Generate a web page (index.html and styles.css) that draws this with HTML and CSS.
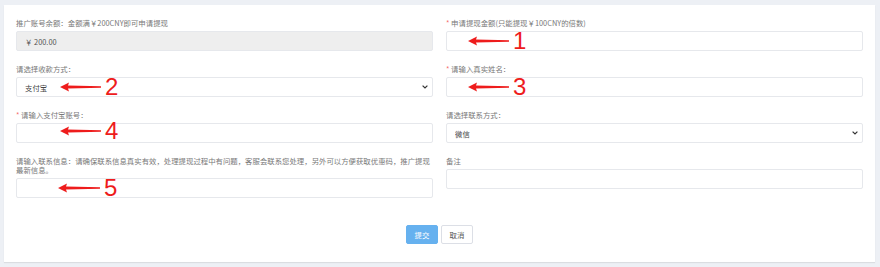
FILE: index.html
```html
<!DOCTYPE html>
<html lang="zh-CN">
<head>
  <meta charset="UTF-8">
  <title>推广提现</title>
  <link rel="stylesheet" href="styles.css">
</head>
<body>
  <div class="card">
    <form class="withdraw-form">
      <div class="form-grid">
        <div class="form-item">
          <label class="form-label">推广账号余额：金额满￥200CNY即可申请提现</label>
          <input class="form-input" type="text" value="￥ 200.00" disabled>
        </div>
        <div class="form-item">
          <label class="form-label"><span class="required">*</span> 申请提现金额(只能提现￥100CNY的倍数)</label>
          <input class="form-input" type="text">
        </div>
        <div class="form-item">
          <label class="form-label">请选择收款方式：</label>
          <div class="select-wrap">
            <select class="form-input form-select">
              <option>支付宝</option>
              <option>微信</option>
            </select>
            <svg class="select-caret" width="6" height="4" viewBox="0 0 6 4"><path d="M0.6 0.6 L3 3 L5.4 0.6"/></svg>
          </div>
        </div>
        <div class="form-item">
          <label class="form-label"><span class="required">*</span> 请输入真实姓名：</label>
          <input class="form-input" type="text">
        </div>
        <div class="form-item">
          <label class="form-label"><span class="required">*</span> 请输入支付宝账号：</label>
          <input class="form-input" type="text">
        </div>
        <div class="form-item">
          <label class="form-label">请选择联系方式：</label>
          <div class="select-wrap">
            <select class="form-input form-select">
              <option>微信</option>
              <option>QQ</option>
            </select>
            <svg class="select-caret" width="6" height="4" viewBox="0 0 6 4"><path d="M0.6 0.6 L3 3 L5.4 0.6"/></svg>
          </div>
        </div>
        <div class="form-item">
          <label class="form-label">请输入联系信息：请确保联系信息真实有效，处理提现过程中有问题，客服会联系您处理，另外可以方便获取优惠码，推广提现最新信息。</label>
          <input class="form-input" type="text">
        </div>
        <div class="form-item">
          <label class="form-label">备注</label>
          <input class="form-input" type="text">
        </div>
      </div>
      <div class="form-actions">
        <button type="button" class="btn btn-primary">提交</button>
        <button type="button" class="btn">取消</button>
      </div>
    </form>

    <!-- 标注箭头 -->
    <div class="mark mark-1"><svg class="arrow" width="41" height="10" viewBox="0 0 41 10"><polygon points="0,5 9,0.4 8,3.4 41,4.2 41,5.8 8,6.6 9,9.6"/></svg><span class="mark-num">1</span></div>
    <div class="mark mark-2"><svg class="arrow" width="41" height="10" viewBox="0 0 41 10"><polygon points="0,5 9,0.4 8,3.4 41,4.2 41,5.8 8,6.6 9,9.6"/></svg><span class="mark-num">2</span></div>
    <div class="mark mark-3"><svg class="arrow" width="41" height="10" viewBox="0 0 41 10"><polygon points="0,5 9,0.4 8,3.4 41,4.2 41,5.8 8,6.6 9,9.6"/></svg><span class="mark-num">3</span></div>
    <div class="mark mark-4"><svg class="arrow" width="41" height="10" viewBox="0 0 41 10"><polygon points="0,5 9,0.4 8,3.4 41,4.2 41,5.8 8,6.6 9,9.6"/></svg><span class="mark-num">4</span></div>
    <div class="mark mark-5"><svg class="arrow" width="42" height="10" viewBox="0 0 42 10"><polygon points="0,5 9,0.4 8,3.4 42,4.2 42,5.8 8,6.6 9,9.6"/></svg><span class="mark-num">5</span></div>
  </div>
</body>
</html>
```

FILE: styles.css
```css
body {
  margin: 0;
  background: #edf0f5;
  font-family: 'Noto Sans CJK SC', 'Liberation Sans', sans-serif;
  color: #606266;
}
.card {
  position: relative;
  margin: 5px 5px 5px 4px;
  width: 871px;
  height: 257px;
  box-sizing: border-box;
  padding: 13px 12px 18px;
  background: #fff;
  box-shadow: 0 1px 1px rgba(0, 0, 0, 0.08);
}
.form-grid {
  display: grid;
  grid-template-columns: 1fr 1fr;
  column-gap: 13px;
  row-gap: 13px;
}
.form-item {
  display: flex;
  flex-direction: column;
}
.form-label {
  font-size: 7.4px;
  line-height: 9px;
  color: #787878;
  margin-bottom: 4px;
}
.required {
  color: #f56c6c;
}
.form-input {
  height: 20px;
  box-sizing: border-box;
  border: 1px solid #e6e8ec;
  border-radius: 2px;
  padding: 0 8px;
  font-family: inherit;
  font-size: 7.4px;
  color: #444;
  background: #fff;
  outline: none;
}
.form-input:disabled {
  background: #eeeeee;
  color: #555;
}
.select-wrap {
  position: relative;
  display: flex;
  flex-direction: column;
}
.form-select {
  appearance: none;
  padding-left: 8px;
}
.select-caret {
  position: absolute;
  right: 5px;
  top: 8px;
}
.select-caret path {
  fill: none;
  stroke: #333;
  stroke-width: 1.2;
}
.form-actions {
  display: flex;
  justify-content: center;
  gap: 3px;
  margin-top: 27px;
}
.btn {
  width: 32px;
  height: 19px;
  padding: 0;
  border: 1px solid #dcdfe6;
  border-radius: 2px;
  background: #fff;
  color: #555;
  font-family: inherit;
  font-size: 7.4px;
  cursor: pointer;
}
.btn-primary {
  background: #66b1ef;
  border-color: #66b1ef;
  color: #fff;
}

/* 标注 */
.mark {
  position: absolute;
  display: flex;
  align-items: center;
  gap: 4px;
  color: #ee1c1c;
}
.arrow polygon {
  fill: #ee1c1c;
}
.mark-num {
  font-family: 'Liberation Sans', sans-serif;
  font-size: 24px;
  line-height: 24px;
}
.mark-1 { left: 464px; top: 24px; }
.mark-2 { left: 56px; top: 70px; }
.mark-3 { left: 464px; top: 70px; }
.mark-4 { left: 56px; top: 114px; }
.mark-5 { left: 54px; top: 171px; }
```
